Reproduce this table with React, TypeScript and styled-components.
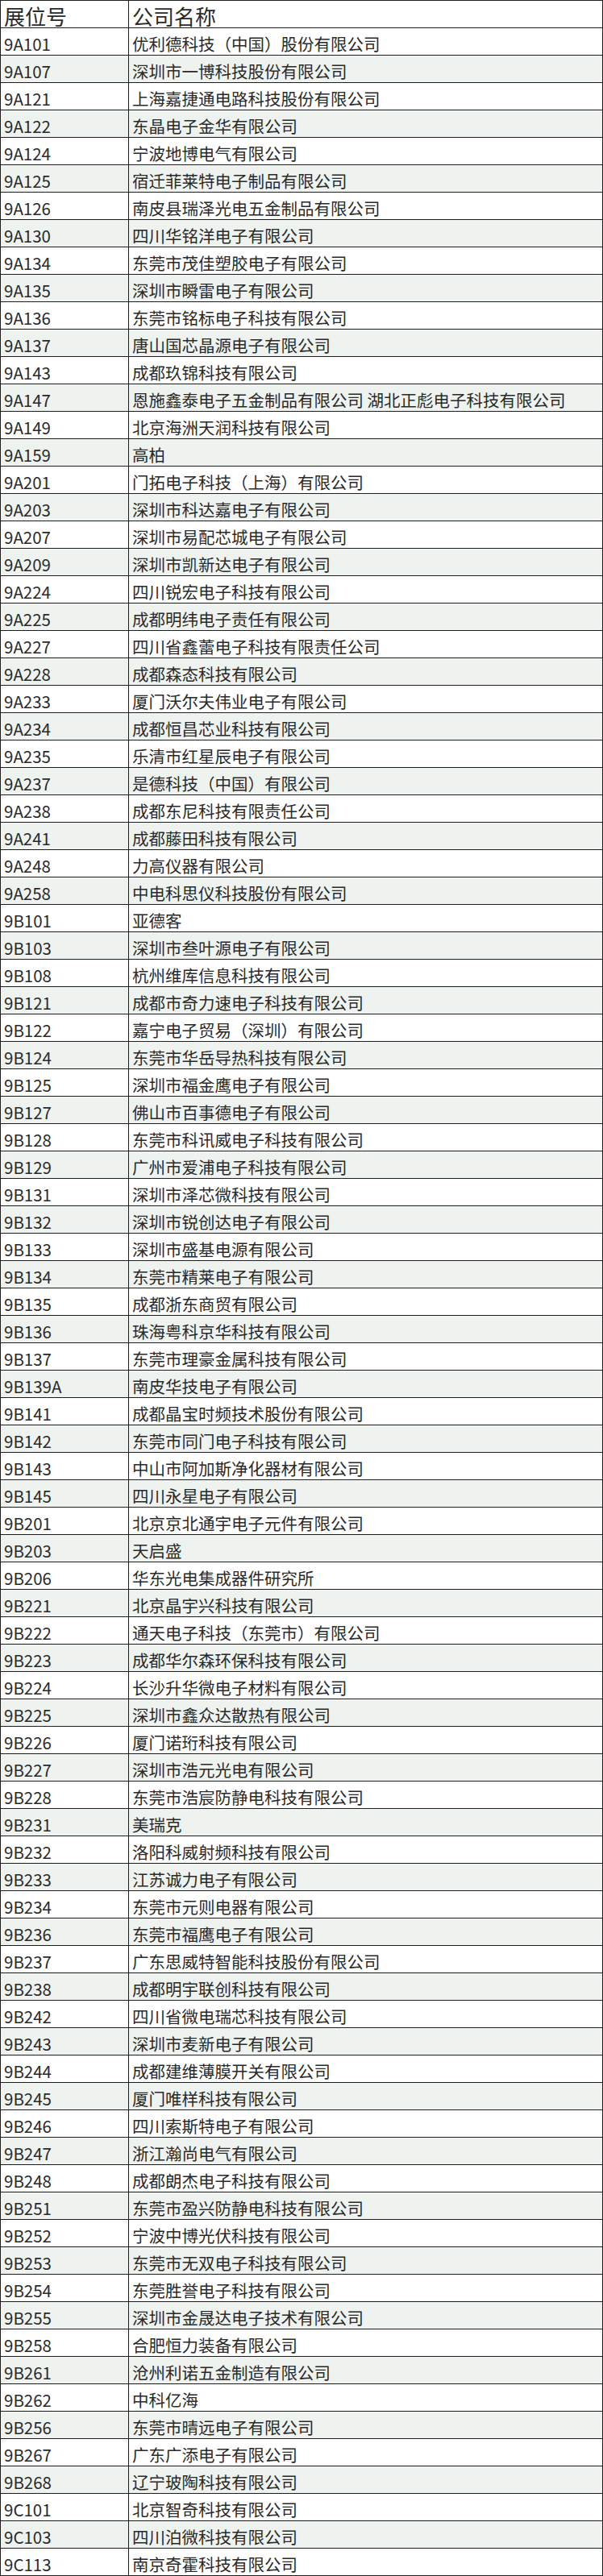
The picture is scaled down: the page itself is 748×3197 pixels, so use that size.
import * as React from 'react';
import styled, { createGlobalStyle } from 'styled-components';

const GlobalStyle = createGlobalStyle`
  html, body {
    margin: 0;
    padding: 0;
    background: #ffffff;
  }
  body {
    font-family: "Noto Sans CJK SC", "Noto Sans", sans-serif;
    color: #2a2a2a;
  }
`;

const rows: [string, string][] = [
  ['9A101', '优利德科技（中国）股份有限公司'],
  ['9A107', '深圳市一博科技股份有限公司'],
  ['9A121', '上海嘉捷通电路科技股份有限公司'],
  ['9A122', '东晶电子金华有限公司'],
  ['9A124', '宁波地博电气有限公司'],
  ['9A125', '宿迁菲莱特电子制品有限公司'],
  ['9A126', '南皮县瑞泽光电五金制品有限公司'],
  ['9A130', '四川华铭洋电子有限公司'],
  ['9A134', '东莞市茂佳塑胶电子有限公司'],
  ['9A135', '深圳市瞬雷电子有限公司'],
  ['9A136', '东莞市铭标电子科技有限公司'],
  ['9A137', '唐山国芯晶源电子有限公司'],
  ['9A143', '成都玖锦科技有限公司'],
  ['9A147', '恩施鑫泰电子五金制品有限公司 湖北正彪电子科技有限公司'],
  ['9A149', '北京海洲天润科技有限公司'],
  ['9A159', '高柏'],
  ['9A201', '门拓电子科技（上海）有限公司'],
  ['9A203', '深圳市科达嘉电子有限公司'],
  ['9A207', '深圳市易配芯城电子有限公司'],
  ['9A209', '深圳市凯新达电子有限公司'],
  ['9A224', '四川锐宏电子科技有限公司'],
  ['9A225', '成都明纬电子责任有限公司'],
  ['9A227', '四川省鑫蕾电子科技有限责任公司'],
  ['9A228', '成都森态科技有限公司'],
  ['9A233', '厦门沃尔夫伟业电子有限公司'],
  ['9A234', '成都恒昌芯业科技有限公司'],
  ['9A235', '乐清市红星辰电子有限公司'],
  ['9A237', '是德科技（中国）有限公司'],
  ['9A238', '成都东尼科技有限责任公司'],
  ['9A241', '成都藤田科技有限公司'],
  ['9A248', '力高仪器有限公司'],
  ['9A258', '中电科思仪科技股份有限公司'],
  ['9B101', '亚德客'],
  ['9B103', '深圳市叁叶源电子有限公司'],
  ['9B108', '杭州维库信息科技有限公司'],
  ['9B121', '成都市奇力速电子科技有限公司'],
  ['9B122', '嘉宁电子贸易（深圳）有限公司'],
  ['9B124', '东莞市华岳导热科技有限公司'],
  ['9B125', '深圳市福金鹰电子有限公司'],
  ['9B127', '佛山市百事德电子有限公司'],
  ['9B128', '东莞市科讯威电子科技有限公司'],
  ['9B129', '广州市爱浦电子科技有限公司'],
  ['9B131', '深圳市泽芯微科技有限公司'],
  ['9B132', '深圳市锐创达电子有限公司'],
  ['9B133', '深圳市盛基电源有限公司'],
  ['9B134', '东莞市精莱电子有限公司'],
  ['9B135', '成都浙东商贸有限公司'],
  ['9B136', '珠海粤科京华科技有限公司'],
  ['9B137', '东莞市理豪金属科技有限公司'],
  ['9B139A', '南皮华技电子有限公司'],
  ['9B141', '成都晶宝时频技术股份有限公司'],
  ['9B142', '东莞市同门电子科技有限公司'],
  ['9B143', '中山市阿加斯净化器材有限公司'],
  ['9B145', '四川永星电子有限公司'],
  ['9B201', '北京京北通宇电子元件有限公司'],
  ['9B203', '天启盛'],
  ['9B206', '华东光电集成器件研究所'],
  ['9B221', '北京晶宇兴科技有限公司'],
  ['9B222', '通天电子科技（东莞市）有限公司'],
  ['9B223', '成都华尔森环保科技有限公司'],
  ['9B224', '长沙升华微电子材料有限公司'],
  ['9B225', '深圳市鑫众达散热有限公司'],
  ['9B226', '厦门诺珩科技有限公司'],
  ['9B227', '深圳市浩元光电有限公司'],
  ['9B228', '东莞市浩宸防静电科技有限公司'],
  ['9B231', '美瑞克'],
  ['9B232', '洛阳科威射频科技有限公司'],
  ['9B233', '江苏诚力电子有限公司'],
  ['9B234', '东莞市元则电器有限公司'],
  ['9B236', '东莞市福鹰电子有限公司'],
  ['9B237', '广东思威特智能科技股份有限公司'],
  ['9B238', '成都明宇联创科技有限公司'],
  ['9B242', '四川省微电瑞芯科技有限公司'],
  ['9B243', '深圳市麦新电子有限公司'],
  ['9B244', '成都建维薄膜开关有限公司'],
  ['9B245', '厦门唯样科技有限公司'],
  ['9B246', '四川索斯特电子有限公司'],
  ['9B247', '浙江瀚尚电气有限公司'],
  ['9B248', '成都朗杰电子科技有限公司'],
  ['9B251', '东莞市盈兴防静电科技有限公司'],
  ['9B252', '宁波中博光伏科技有限公司'],
  ['9B253', '东莞市无双电子科技有限公司'],
  ['9B254', '东莞胜誉电子科技有限公司'],
  ['9B255', '深圳市金晟达电子技术有限公司'],
  ['9B258', '合肥恒力装备有限公司'],
  ['9B261', '沧州利诺五金制造有限公司'],
  ['9B262', '中科亿海'],
  ['9B256', '东莞市晴远电子有限公司'],
  ['9B267', '广东广添电子有限公司'],
  ['9B268', '辽宁玻陶科技有限公司'],
  ['9C101', '北京智奇科技有限公司'],
  ['9C103', '四川泊微科技有限公司'],
  ['9C113', '南京奇霍科技有限公司'],
];

const Table = styled.div`
  width: 748px;
  box-sizing: border-box;
  border-top: 1px solid #1e1e1e;
  border-left: 1px solid #1e1e1e;
`;

const Row = styled.div<{ $shaded?: boolean }>`
  display: grid;
  grid-template-columns: 159px 1fr;
  height: 34px;
  background: ${p => (p.$shaded ? '#eef3ef' : '#ffffff')};
`;

const Cell = styled.div<{ $head?: boolean }>`
  box-sizing: border-box;
  display: flex;
  align-items: center;
  padding: ${p => (p.$head ? '4px' : '6px')} 4px 0 4px;
  border-right: 1px solid #1e1e1e;
  border-bottom: 1px solid #1e1e1e;
  font-size: ${p => (p.$head ? '26px' : '20.5px')};
  line-height: 1;
  white-space: nowrap;
  color: #2a2a2a;
`;

const App: React.FC = () => {
  return (
    <>
      <GlobalStyle />
      <Table>
        <Row>
          <Cell $head>展位号</Cell>
          <Cell $head>公司名称</Cell>
        </Row>
        {rows.map(([code, name], i) => (
          <Row key={code + i} $shaded={i % 2 === 1}>
            <Cell>{code}</Cell>
            <Cell>{name}</Cell>
          </Row>
        ))}
      </Table>
    </>
  );
};

export default App;
